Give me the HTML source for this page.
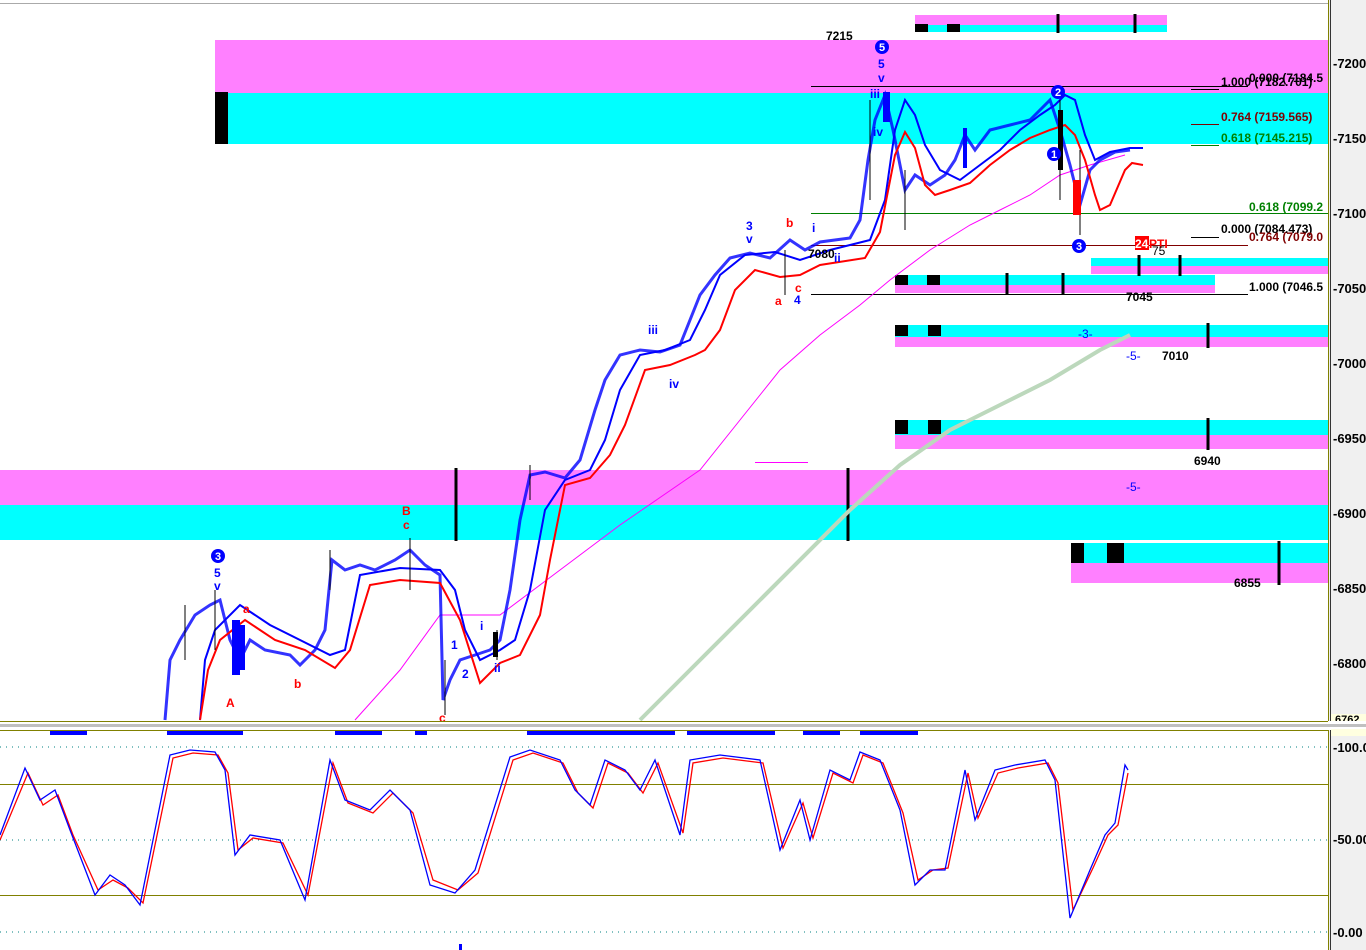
<!DOCTYPE html>
<html><head><meta charset="utf-8"><style>
html,body{margin:0;padding:0;background:#fff;}
svg{display:block;font-family:"Liberation Sans",sans-serif;}
</style></head><body>
<svg width="1366" height="950" viewBox="0 0 1366 950" xmlns="http://www.w3.org/2000/svg">
<rect width="1366" height="950" fill="#fff"/>
<rect x="1329" y="0" width="37" height="950" fill="#f0f0f0"/>
<line x1="1328.5" y1="0" x2="1328.5" y2="950" stroke="#808000" stroke-width="1"/>
<line x1="1330.5" y1="0" x2="1330.5" y2="950" stroke="#333" stroke-width="1"/>
<line x1="0" y1="3.5" x2="1328" y2="3.5" stroke="#aaa"/>
<rect x="215" y="40" width="1113" height="53" fill="#ff80ff"/>
<rect x="215" y="93" width="1113" height="51" fill="#00ffff"/>
<rect x="215" y="92" width="13" height="52" fill="#000"/>
<rect x="915" y="15" width="252" height="10" fill="#ff80ff"/>
<rect x="915" y="25" width="252" height="7" fill="#00ffff"/>
<rect x="915" y="24" width="13" height="8" fill="#000"/><rect x="947" y="24" width="13" height="8" fill="#000"/>
<line x1="1058" y1="14" x2="1058" y2="33" stroke="#000" stroke-width="3"/>
<line x1="1135" y1="14" x2="1135" y2="33" stroke="#000" stroke-width="3"/>
<rect x="0" y="470" width="1328" height="35" fill="#ff80ff"/>
<rect x="0" y="505" width="1328" height="35" fill="#00ffff"/>
<line x1="456" y1="468" x2="456" y2="541" stroke="#000" stroke-width="3"/>
<line x1="848" y1="468" x2="848" y2="541" stroke="#000" stroke-width="3"/>
<rect x="1091" y="258" width="237" height="8" fill="#00ffff"/>
<rect x="1091" y="266" width="237" height="8" fill="#ff80ff"/>
<rect x="895" y="275" width="320" height="10" fill="#00ffff"/>
<rect x="895" y="285" width="320" height="8" fill="#ff80ff"/>
<rect x="895" y="275" width="13" height="10" fill="#000"/><rect x="927" y="275" width="13" height="10" fill="#000"/>
<line x1="1007" y1="273" x2="1007" y2="294" stroke="#000" stroke-width="3"/>
<line x1="1063" y1="273" x2="1063" y2="294" stroke="#000" stroke-width="3"/>
<line x1="1139" y1="255" x2="1139" y2="276" stroke="#000" stroke-width="3"/>
<line x1="1180" y1="255" x2="1180" y2="276" stroke="#000" stroke-width="3"/>
<rect x="895" y="325" width="433" height="12" fill="#00ffff"/>
<rect x="895" y="337" width="433" height="10" fill="#ff80ff"/>
<rect x="895" y="325" width="13" height="11" fill="#000"/><rect x="928" y="325" width="13" height="11" fill="#000"/>
<line x1="1208" y1="323" x2="1208" y2="348" stroke="#000" stroke-width="3"/>
<rect x="895" y="420" width="433" height="15" fill="#00ffff"/>
<rect x="895" y="435" width="433" height="14" fill="#ff80ff"/>
<rect x="895" y="420" width="13" height="14" fill="#000"/><rect x="928" y="420" width="13" height="14" fill="#000"/>
<line x1="1208" y1="418" x2="1208" y2="450" stroke="#000" stroke-width="3"/>
<rect x="1071" y="543" width="257" height="20" fill="#00ffff"/>
<rect x="1071" y="563" width="257" height="20" fill="#ff80ff"/>
<rect x="1071" y="543" width="13" height="20" fill="#000"/><rect x="1107" y="543" width="17" height="20" fill="#000"/>
<line x1="1279" y1="541" x2="1279" y2="585" stroke="#000" stroke-width="3"/>
<line x1="811" y1="86.5" x2="1248" y2="86.5" stroke="#000"/>
<line x1="811" y1="213.5" x2="1328" y2="213.5" stroke="#008000"/>
<line x1="811" y1="245.5" x2="1248" y2="245.5" stroke="#800000"/>
<line x1="811" y1="294.5" x2="1248" y2="294.5" stroke="#000"/>
<line x1="1191" y1="89.5" x2="1219" y2="89.5" stroke="#000"/>
<line x1="1191" y1="124.5" x2="1219" y2="124.5" stroke="#800000"/>
<line x1="1191" y1="145.5" x2="1219" y2="145.5" stroke="#008000"/>
<line x1="1191" y1="237.5" x2="1219" y2="237.5" stroke="#000"/>
<line x1="755" y1="462.5" x2="808" y2="462.5" stroke="#ff00ff"/>
<polyline fill="none" stroke="#bcd8bc" stroke-width="4" points="640,720 700,660 760,600 850,510 900,465 950,430 1000,405 1050,380 1100,350 1130,335"/>
<polyline fill="none" stroke="#ff00ff" stroke-width="1" points="355,720 400,670 440,615 500,615 560,570 620,525 700,470 740,420 780,370 820,335 860,305 890,280 930,250 970,225 1000,210 1030,195 1060,175 1090,165 1125,155"/>
<polyline fill="none" stroke="#0000ff" stroke-width="3" stroke-opacity="0.8" points="165,720 170,660 180,640 195,615 210,605 220,600 230,640 240,660 250,640 265,650 290,655 300,665 315,650 325,630 332,560 345,570 360,565 375,570 395,560 410,550 425,565 440,575 443,700 450,680 460,660 475,655 490,650 500,640 510,590 520,520 530,475 545,472 565,478 580,460 595,410 605,380 620,355 640,350 660,352 680,345 690,320 700,295 715,275 730,258 750,253 770,258 790,240 805,250 820,242 850,238 860,220 868,160 875,120 885,95 893,130 905,190 915,175 930,185 945,175 955,160 965,135 975,150 990,130 1010,125 1030,120 1050,100 1060,130 1070,165 1080,205 1090,170 1100,160 1115,152 1130,150"/>
<polyline fill="none" stroke="#0000ff" stroke-width="2" points="200,720 205,660 215,630 240,605 270,625 300,640 330,655 345,650 360,575 400,568 440,570 455,590 465,630 480,660 500,650 515,640 530,590 545,510 565,480 590,470 605,440 620,390 640,355 665,350 690,340 705,310 720,275 745,255 775,252 800,260 830,250 870,240 885,200 895,130 905,100 915,115 925,145 940,170 960,180 980,165 1000,150 1020,130 1040,115 1055,105 1065,95 1075,100 1085,135 1095,160 1110,152 1130,148 1143,148"/>
<polyline fill="none" stroke="#ff0000" stroke-width="2" points="200,720 208,670 220,640 245,620 275,640 305,650 335,668 350,650 370,585 400,580 440,583 460,620 480,683 500,663 520,655 540,615 550,560 565,485 590,478 610,455 625,425 645,370 670,365 695,355 705,350 720,330 735,290 755,270 780,277 800,275 820,265 865,258 880,232 895,155 905,132 915,148 925,185 935,195 950,190 970,183 990,165 1010,150 1030,138 1050,130 1065,125 1075,135 1085,160 1095,195 1100,210 1110,205 1125,170 1132,163 1143,165"/>
<g stroke="#000" stroke-width="1">
<line x1="185" y1="605" x2="185" y2="660"/><line x1="215" y1="590" x2="215" y2="650"/><line x1="330" y1="550" x2="330" y2="590"/><line x1="410" y1="538" x2="410" y2="590"/><line x1="445" y1="660" x2="445" y2="715"/><line x1="497" y1="630" x2="497" y2="660"/><line x1="530" y1="465" x2="530" y2="500"/><line x1="785" y1="250" x2="785" y2="295"/><line x1="870" y1="100" x2="870" y2="200"/><line x1="905" y1="170" x2="905" y2="230"/><line x1="1060" y1="100" x2="1060" y2="200"/><line x1="1080" y1="150" x2="1080" y2="235"/>
</g>
<rect x="232" y="620" width="8" height="55" fill="#0000ff"/>
<rect x="240" y="625" width="5" height="45" fill="#0000ff"/>
<rect x="883" y="92" width="7" height="30" fill="#0000ff"/>
<rect x="1058" y="110" width="5" height="60" fill="#000"/>
<rect x="1073" y="180" width="8" height="35" fill="#ff0000"/>
<rect x="963" y="128" width="4" height="40" fill="#0000ff"/>
<rect x="493" y="632" width="5" height="25" fill="#000"/>
<g font-size="12" font-weight="bold">
<text x="826" y="40" fill="#000">7215</text>
<text x="1126" y="301" fill="#000">7045</text>
<text x="1162" y="360" fill="#000">7010</text>
<text x="1194" y="465" fill="#000">6940</text>
<text x="1234" y="587" fill="#000">6855</text>
<text x="808" y="258" fill="#000">7080</text>
<text x="1221" y="86" fill="#000">1.000 (7182.701)</text>
<text x="1249" y="82" fill="#000">0.000 (7184.5</text>
<text x="1221" y="121" fill="#800000">0.764 (7159.565)</text>
<text x="1221" y="142" fill="#008000">0.618 (7145.215)</text>
<text x="1249" y="211" fill="#008000">0.618 (7099.2</text>
<text x="1221" y="233" fill="#000">0.000 (7084.473)</text>
<text x="1249" y="241" fill="#800000">0.764 (7079.0</text>
<text x="1249" y="291" fill="#000">1.000 (7046.5</text>
<rect x="1135" y="236" width="14" height="14" fill="#ff0000"/>
<text x="1135" y="248" fill="#fff">24</text><text x="1149" y="248" fill="#ff0000">PTI</text>
<text x="1152" y="255" fill="#000" font-weight="normal">75</text>
<text x="1078" y="338" fill="#0000ff" font-weight="normal">-3-</text>
<text x="1126" y="360" fill="#0000ff" font-weight="normal">-5-</text>
<text x="1126" y="491" fill="#0000ff" font-weight="normal">-5-</text>
<g fill="#0000ff"><text x="878" y="68">5</text><text x="878" y="82">v</text><text x="870" y="98">iii</text><text x="873" y="136">iv</text>
<text x="214" y="577">5</text><text x="214" y="590">v</text><text x="746" y="230">3</text><text x="746" y="243">v</text><text x="812" y="232">i</text><text x="834" y="262">ii</text><text x="794" y="304">4</text><text x="648" y="334">iii</text><text x="669" y="388">iv</text><text x="451" y="649">1</text><text x="462" y="678">2</text><text x="480" y="630">i</text><text x="494" y="672">ii</text></g>
<g fill="#ff0000"><text x="402" y="515">B</text><text x="403" y="529">c</text><text x="226" y="707">A</text><text x="294" y="688">b</text><text x="786" y="227">b</text><text x="795" y="292">c</text><text x="775" y="305">a</text><text x="439" y="722">c</text><text x="243" y="613">a</text></g>
</g>
<g font-size="11" font-weight="bold" fill="#fff" text-anchor="middle">
<circle cx="882" cy="47" r="7" fill="#0000ff"/><text x="882" y="51">5</text>
<circle cx="218" cy="556" r="7" fill="#0000ff"/><text x="218" y="560">3</text>
<circle cx="1058" cy="92" r="7" fill="#0000ff"/><text x="1058" y="96">2</text>
<circle cx="1054" cy="154" r="7" fill="#0000ff"/><text x="1054" y="158">1</text>
<circle cx="1079" cy="246" r="7" fill="#0000ff"/><text x="1079" y="250">3</text>
</g>
<g font-size="13" font-weight="bold" fill="#000">
<text x="1333" y="68">-7200</text><text x="1333" y="143">-7150</text><text x="1333" y="218">-7100</text><text x="1333" y="293">-7050</text><text x="1333" y="368">-7000</text><text x="1333" y="443">-6950</text><text x="1333" y="518">-6900</text><text x="1333" y="593">-6850</text><text x="1333" y="668">-6800</text>
<text x="1333" y="752">-100.0</text><text x="1333" y="844">-50.00</text><text x="1333" y="937">-0.00</text>
</g>
<rect x="1331" y="714" width="35" height="8" fill="#ffffe0"/><text x="1335" y="723" font-size="11" font-weight="bold">6762</text>
<rect x="0" y="721" width="1366" height="9" fill="#fff"/>
<line x1="0" y1="721.5" x2="1328" y2="721.5" stroke="#808000"/>
<rect x="0" y="724" width="1366" height="3" fill="#c0c0c0"/>
<line x1="0" y1="730.5" x2="1328" y2="730.5" stroke="#808000"/>
<rect x="1331" y="729" width="35" height="7" fill="#ffffe0"/>
<g fill="#0000ff"><rect x="50" y="731" width="37" height="4"/><rect x="167" y="731" width="76" height="4"/><rect x="335" y="731" width="47" height="4"/><rect x="415" y="731" width="12" height="4"/><rect x="527" y="731" width="148" height="4"/><rect x="687" y="731" width="88" height="4"/><rect x="803" y="731" width="37" height="4"/><rect x="860" y="731" width="58" height="4"/><rect x="459" y="944" width="3" height="6"/></g>
<g stroke="#008080" stroke-dasharray="1 5"><line x1="0" y1="747" x2="1328" y2="747"/><line x1="0" y1="840" x2="1328" y2="840"/><line x1="0" y1="932" x2="1328" y2="932"/></g>
<line x1="0" y1="784.5" x2="1328" y2="784.5" stroke="#808000"/>
<line x1="0" y1="895.5" x2="1328" y2="895.5" stroke="#808000"/>
<polyline fill="none" stroke="#ff0000" stroke-width="1.3" points="0,840 28,773 43,805 58,795 73,835 98,890 113,880 128,888 143,903 173,758 193,753 218,755 228,773 238,850 253,838 283,843 308,895 333,763 348,803 373,813 393,793 413,813 433,880 458,890 478,873 513,760 533,753 563,763 578,793 593,808 608,763 628,773 643,793 658,763 683,833 693,763 723,758 763,763 783,848 803,803 813,838 833,773 853,783 863,755 883,763 903,813 918,880 933,870 948,868 968,773 978,818 998,773 1018,768 1048,763 1058,783 1073,910 1093,868 1108,835 1118,825 1128,773"/>
<polyline fill="none" stroke="#0000ff" stroke-width="1.3" points="0,835 25,768 40,800 55,790 70,830 95,895 110,875 125,885 140,905 170,755 190,750 215,752 225,770 235,855 250,835 280,840 305,900 330,760 345,800 370,810 390,790 410,810 430,885 455,893 475,870 510,757 530,750 560,760 575,790 590,805 605,760 625,770 640,790 655,760 680,835 690,760 720,755 760,760 780,850 800,800 810,840 830,770 850,780 860,752 880,760 900,810 915,885 930,870 945,870 965,770 975,820 995,770 1015,765 1045,760 1055,780 1070,918 1090,870 1105,835 1115,823 1125,765 1128,770"/>
</svg>
</body></html>
